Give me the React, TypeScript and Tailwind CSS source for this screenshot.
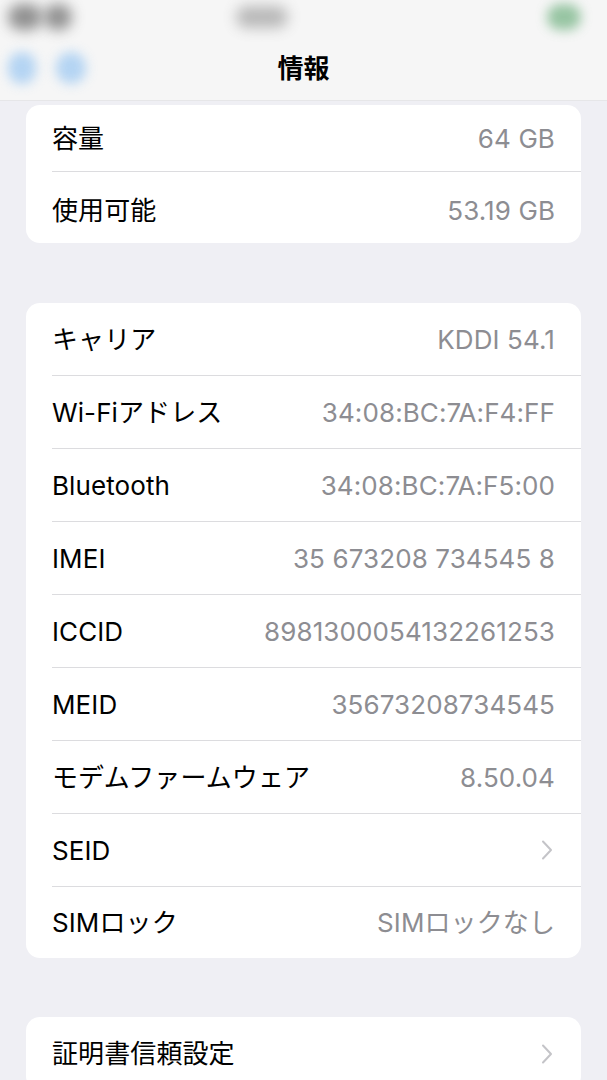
const font = { fontFamily: 'Inter, "Noto Sans CJK JP", sans-serif' };

type Row = { label: string; value?: string; chevron?: boolean; h?: string };

const storage: Row[] = [
  { label: '容量', value: '64 GB', h: 'h-[67px]' },
  { label: '使用可能', value: '53.19 GB', h: 'h-[71px] pt-[5px]' },
];

const network: Row[] = [
  { label: 'キャリア', value: 'KDDI 54.1' },
  { label: 'Wi-Fiアドレス', value: '34:08:BC:7A:F4:FF' },
  { label: 'Bluetooth', value: '34:08:BC:7A:F5:00' },
  { label: 'IMEI', value: '35 673208 734545 8' },
  { label: 'ICCID', value: '8981300054132261253' },
  { label: 'MEID', value: '35673208734545' },
  { label: 'モデムファームウェア', value: '8.50.04' },
  { label: 'SEID', chevron: true },
  { label: 'SIMロック', value: 'SIMロックなし', h: 'h-[71px]' },
];

const cert: Row[] = [{ label: '証明書信頼設定', chevron: true }];

function Chevron() {
  return (
    <svg width="12" height="22" viewBox="0 0 12 22" className="text-[#c4c4c8] mr-[2px]">
      <path d="M2 2.5 L10 11 L2 19.5" fill="none" stroke="currentColor" strokeWidth="2" strokeLinecap="round" strokeLinejoin="round" />
    </svg>
  );
}

function Group({ rows }: { rows: Row[] }) {
  return (
    <div className="mx-[26px] bg-white rounded-[14px] overflow-hidden">
      {rows.map((row, i) => (
        <div key={row.label} className="pl-[26px]">
          <div
            className={
              'flex items-center justify-between pr-[26px] ' +
              (row.h ?? 'h-[73px]') +
              (i < rows.length - 1 ? ' border-b border-[#dcdcdf]' : '')
            }
          >
            <span className="text-[26px] text-black tracking-[0.1px]">{row.label}</span>
            {row.chevron ? (
              <Chevron />
            ) : (
              <span className="text-[26px] text-[#8d8d92] tracking-[0.1px]">{row.value}</span>
            )}
          </div>
        </div>
      ))}
    </div>
  );
}

export default function App() {
  return (
    <div className="w-[607px] h-[1080px] overflow-hidden bg-[#efeff4] relative" style={font}>
      <header className="relative h-[101px] bg-[#f6f6f6] border-b border-[#e6e6e8] overflow-hidden">
        <div className="absolute left-[8px] top-[4px] w-[34px] h-[26px] rounded-full bg-[#3c3c3c] opacity-55 blur-[7px]" />
        <div className="absolute left-[44px] top-[4px] w-[28px] h-[26px] rounded-full bg-[#3c3c3c] opacity-55 blur-[7px]" />
        <div className="absolute left-[236px] top-[6px] w-[52px] h-[22px] rounded-full bg-[#6f6f6f] opacity-45 blur-[7px]" />
        <div className="absolute left-[547px] top-[4px] w-[34px] h-[26px] rounded-full bg-[#6fb07f] opacity-70 blur-[6px]" />
        <div className="absolute left-[8px] top-[52px] w-[28px] h-[32px] rounded-full bg-[#9ec9f2] opacity-75 blur-[6px]" />
        <div className="absolute left-[56px] top-[52px] w-[30px] h-[32px] rounded-full bg-[#9ec9f2] opacity-75 blur-[6px]" />
        <div className="absolute inset-x-0 top-[49px] flex justify-center">
          <span className="text-[26px] font-bold text-black">情報</span>
        </div>
      </header>
      <div className="flex flex-col pt-[4px]">
        <Group rows={storage} />
        <div className="h-[60px]" />
        <Group rows={network} />
        <div className="h-[59px]" />
        <Group rows={cert} />
      </div>
    </div>
  );
}
